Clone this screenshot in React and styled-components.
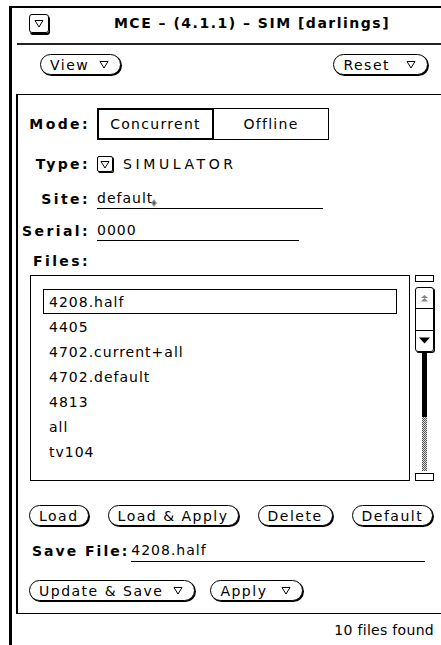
import React from "react";
import styled, { createGlobalStyle } from "styled-components";

const GlobalStyle = createGlobalStyle`
  html, body {
    margin: 0;
    padding: 0;
    background: #fff;
    overflow: hidden;
  }
  body {
    font-family: "DejaVu Sans", "Liberation Sans", sans-serif;
    font-size: 14px;
    color: #000;
  }
`;

const files = [
  "4208.half",
  "4405",
  "4702.current+all",
  "4702.default",
  "4813",
  "all",
  "tv104",
];

function MenuMark() {
  return (
    <svg width="10" height="9" viewBox="0 0 10 9">
      <path d="M1 1.5 H9 L5 8 Z" fill="none" stroke="#000" strokeWidth="1" />
    </svg>
  );
}

function Caret() {
  return (
    <CaretMark width="8" height="10" viewBox="0 0 8 10">
      <path d="M4 1 L7 5 L4 9 L1 5 Z" fill="#999" />
      <path d="M4 3 L5.5 5 L4 7 L2.5 5 Z" fill="#555" />
    </CaretMark>
  );
}

export default function App() {
  return (
    <>
      <GlobalStyle />
      <Frame>
        <TitleBar>
          <WindowMenu>
            <MenuMark />
          </WindowMenu>
          <Title>MCE – (4.1.1) – SIM [darlings]</Title>
        </TitleBar>
        <Divider />

        <Controls>
          <Button $menu>
            View <MenuMark />
          </Button>
          <Button $menu $gap={16}>
            Reset <MenuMark />
          </Button>
        </Controls>

        <Panel>
          <FormRow $top={13} $h={32}>
            <Label>Mode:</Label>
            <Choice $on $w={117}>Concurrent</Choice>
            <Choice $w={115}>Offline</Choice>
          </FormRow>

          <FormRow $top={14} $h={20}>
            <Label>Type:</Label>
            <MenuBox>
              <MenuMark />
            </MenuBox>
            <TypeValue>SIMULATOR</TypeValue>
          </FormRow>

          <FormRow $top={14} $h={21}>
            <Label>Site:</Label>
            <Field $w={226}>
              default
              <Caret />
            </Field>
          </FormRow>

          <FormRow $top={11} $h={21}>
            <Label>Serial:</Label>
            <Field $w={202}>0000</Field>
          </FormRow>

          <FormRow $top={11} $h={18}>
            <Label>Files:</Label>
          </FormRow>

          <ListArea>
            <ListBox>
              {files.map((f, i) => (
                <Item key={f} $on={i === 0}>
                  {f}
                </Item>
              ))}
            </ListBox>
            <Scrollbar>
              <Anchor $h={7} />
              <Elevator>
                <ElevatorCell>
                  <svg width="9" height="7" viewBox="0 0 9 7">
                    <path d="M4.5 0 L8 3 H1 Z" fill="#888" />
                    <path d="M4.5 3 L8 6.5 H1 Z" fill="#888" />
                  </svg>
                </ElevatorCell>
                <ElevatorCell $mid />
                <ElevatorCell>
                  <svg width="11" height="7" viewBox="0 0 11 7">
                    <path d="M0 0.5 H11 L5.5 6.5 Z" fill="#000" />
                  </svg>
                </ElevatorCell>
              </Elevator>
              <Cable>
                <CableFill />
                <CableRest />
              </Cable>
              <Anchor $h={8} />
            </Scrollbar>
          </ListArea>

          <ButtonRow $top={24} $gap={19}>
            <Button>Load</Button>
            <Button>Load &amp; Apply</Button>
            <Button>Delete</Button>
            <Button>Default</Button>
          </ButtonRow>

          <SaveRow>
            <SaveLabel>Save File:</SaveLabel>
            <Field $w={294}>4208.half</Field>
          </SaveRow>

          <ButtonRow $top={18} $gap={15}>
            <Button $menu>
              Update &amp; Save <MenuMark />
            </Button>
            <Button $menu $gap={14}>
              Apply <MenuMark />
            </Button>
          </ButtonRow>
        </Panel>

        <Status>10 files found</Status>
      </Frame>
    </>
  );
}

const Frame = styled.div`
  box-sizing: border-box;
  height: 639px;
  margin: 6px 0 0 9px;
  border-top: 2px solid #000;
  border-left: 3px solid #000;
  display: flex;
  flex-direction: column;
`;

const TitleBar = styled.header`
  height: 35px;
  display: flex;
  align-items: center;
  padding: 0 0 5px 17px;
  box-sizing: border-box;
`;

const WindowMenu = styled.div`
  width: 20px;
  height: 19px;
  box-sizing: border-box;
  border: 1px solid #000;
  border-radius: 3px;
  box-shadow: 1px 2px 0 #000;
  display: flex;
  align-items: center;
  justify-content: center;
`;

const Title = styled.div`
  flex: 1;
  text-align: center;
  padding-left: 14px;
  font-weight: bold;
  letter-spacing: 1.5px;
  white-space: nowrap;
`;

const Divider = styled.div`
  height: 2px;
  margin-left: 5px;
  background: #222;
`;

const Controls = styled.div`
  height: 49px;
  box-sizing: border-box;
  display: flex;
  justify-content: space-between;
  align-items: flex-start;
  padding: 9px 13px 0 28px;
`;

const Button = styled.button`
  height: 21px;
  box-sizing: border-box;
  padding: 0 ${(p) => (p.$menu ? 11 : 9)}px 0 9px;
  display: inline-flex;
  align-items: center;
  gap: ${(p) => p.$gap || (p.$menu ? 10 : 7)}px;
  border: 1px solid #000;
  border-radius: 11px;
  box-shadow: 1px 1px 0 #000;
  background: #fff;
  color: #000;
  font-family: inherit;
  font-size: 14px;
  letter-spacing: 1.5px;
  white-space: nowrap;
`;

const Panel = styled.section`
  box-sizing: border-box;
  height: 520px;
  margin: 0 -20px 0 4px;
  border: 1px solid #000;
  border-left-width: 2px;
  display: flex;
  flex-direction: column;
`;

const FormRow = styled.div`
  display: flex;
  align-items: center;
  margin-top: ${(p) => p.$top}px;
  height: ${(p) => p.$h}px;
`;

const Label = styled.span`
  width: 72px;
  margin-right: 7px;
  text-align: right;
  font-weight: bold;
  letter-spacing: 2.4px;
`;

const Choice = styled.div`
  width: ${(p) => p.$w}px;
  height: 32px;
  box-sizing: border-box;
  border: ${(p) => (p.$on ? 2 : 1)}px solid #000;
  ${(p) => !p.$on && "border-left: none;"}
  display: flex;
  align-items: center;
  justify-content: center;
  letter-spacing: 1.3px;
`;

const MenuBox = styled.div`
  width: 16px;
  height: 16px;
  box-sizing: border-box;
  border: 1px solid #000;
  border-radius: 2px;
  box-shadow: 1px 1px 0 #000;
  display: flex;
  align-items: center;
  justify-content: center;
`;

const TypeValue = styled.span`
  margin-left: 10px;
  letter-spacing: 3.6px;
`;

const Field = styled.div`
  width: ${(p) => p.$w}px;
  height: 100%;
  box-sizing: border-box;
  border-bottom: 1px solid #000;
  display: flex;
  align-items: center;
  letter-spacing: 1px;
`;

const CaretMark = styled.svg`
  margin: 10px 0 0 -3px;
`;

const ListArea = styled.div`
  display: flex;
  gap: 5px;
  margin: 5px 0 0 12px;
`;

const ListBox = styled.div`
  width: 380px;
  height: 206px;
  box-sizing: border-box;
  border: 1px solid #000;
  padding: 13px 12px 0;
`;

const Item = styled.div`
  height: 25px;
  box-sizing: border-box;
  padding-left: 5px;
  display: flex;
  align-items: center;
  border: 1px solid ${(p) => (p.$on ? "#000" : "transparent")};
  letter-spacing: 1px;
`;

const Scrollbar = styled.div`
  width: 19px;
  height: 206px;
  display: flex;
  flex-direction: column;
`;

const Anchor = styled.div`
  height: ${(p) => p.$h}px;
  box-sizing: border-box;
  border: 1px solid #000;
`;

const Elevator = styled.div`
  margin-top: 5px;
  height: 65px;
  box-sizing: border-box;
  border: 1px solid #000;
  border-radius: 3px;
  box-shadow: 1px 1px 0 #000;
  display: flex;
  flex-direction: column;
`;

const ElevatorCell = styled.div`
  flex: 1;
  display: flex;
  align-items: center;
  justify-content: center;
  ${(p) => p.$mid && "border-top: 1px solid #000; border-bottom: 1px solid #000;"}
`;

const Cable = styled.div`
  flex: 1;
  width: 5px;
  margin: 1px auto 2px;
  display: flex;
  flex-direction: column;
`;

const CableFill = styled.div`
  height: 64px;
  background: #000;
`;

const CableRest = styled.div`
  flex: 1;
  background: repeating-conic-gradient(#555 0 25%, #ddd 0 50%) 0 0 / 2px 2px;
`;

const ButtonRow = styled.div`
  display: flex;
  gap: ${(p) => p.$gap}px;
  margin-top: ${(p) => p.$top}px;
  padding-left: 11px;
`;

const SaveRow = styled.div`
  display: flex;
  align-items: center;
  height: 23px;
  margin-top: 13px;
  padding-left: 14px;
`;

const SaveLabel = styled.span`
  margin-right: 2px;
  font-weight: bold;
  letter-spacing: 2px;
`;

const Status = styled.div`
  padding: 8px 7px 0 0;
  text-align: right;
  letter-spacing: 0.3px;
`;
